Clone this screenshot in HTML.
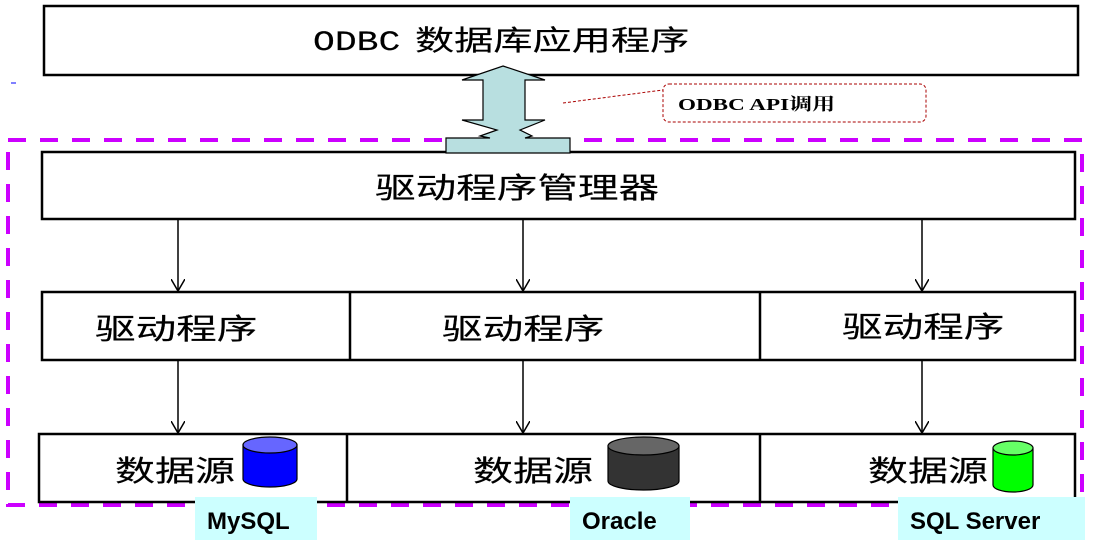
<!DOCTYPE html><html><head><meta charset="utf-8"><style>body{margin:0;background:#fff}svg{display:block}</style></head><body>
<svg width="1097" height="549" xmlns="http://www.w3.org/2000/svg" font-family="'Liberation Sans','Noto Sans CJK SC',sans-serif">
<defs><marker id="a" markerWidth="14" markerHeight="14" refX="12" refY="7" orient="auto" markerUnits="userSpaceOnUse"><path d="M0,0 L12,7 L0,14" fill="none" stroke="#000" stroke-width="1.5"/></marker></defs>
<rect x="44" y="6" width="1034" height="69" fill="#fff" stroke="#000" stroke-width="2.5"/>
<path d="M11,83H16" stroke="#00f" stroke-width="1"/>
<g stroke="#000" stroke-width="0.15" font-size="28">
<text transform="translate(313,50) scale(1.3,1)" font-family="'Liberation Mono',monospace">ODBC</text>
<text transform="translate(415,50) scale(1.4,1)">数据库应用程序</text>
</g>
<rect x="8" y="140" width="1074" height="365" fill="none" stroke="#c0f" stroke-width="4" stroke-dasharray="18,14"/>
<rect x="42" y="152" width="1033" height="67" fill="none" stroke="#000" stroke-width="2.5"/>
<path d="M503,66 L545,80 L525,80 L525,120 L545,120 L520,130 L532,136 L525,138 L570,138 L570,153 L446,153 L446,138 L490,138 L480,136 L497,130 L462,120 L483,120 L483,80 L462,80 Z" fill="#b8dfe0" stroke="#000" stroke-width="1.2"/>
<path d="M563,103 L663,90" stroke="#a00" stroke-width="1" stroke-dasharray="3,2"/>
<rect x="663" y="84" width="263" height="38" rx="6" fill="#fff" stroke="#a00" stroke-dasharray="3,2"/>
<text transform="translate(678,110) scale(1.36,1)" font-size="17" font-weight="bold" font-family="'Liberation Serif','Noto Serif CJK SC',serif">ODBC API调用</text>
<g stroke="#000" stroke-width="2.5" fill="none"><rect x="42" y="292" width="1033" height="68"/><path d="M350,292V360M760,292V360"/>
<rect x="39" y="434" width="1036" height="68"/><path d="M347,434V502M760,434V502"/></g>
<g stroke="#000" stroke-width="1.5" marker-end="url(#a)"><path d="M178,220V291"/><path d="M523,220V291"/><path d="M922,220V291"/><path d="M178,361V433"/><path d="M523,361V433"/><path d="M922,361V433"/></g>
<g font-size="29" stroke="#000" stroke-width="0.15">
<text transform="translate(375,198) scale(1.4,1)">驱动程序管理器</text>
<text transform="translate(95,339) scale(1.4,1)">驱动程序</text><text transform="translate(442,339) scale(1.4,1)">驱动程序</text><text transform="translate(842,337) scale(1.4,1)">驱动程序</text>
<text transform="translate(115,481) scale(1.38,1)">数据源</text><text transform="translate(473,481) scale(1.38,1)">数据源</text><text transform="translate(868,481) scale(1.38,1)">数据源</text></g>
<g stroke="#000" stroke-width="1.2"><path d="M243,445V479A27,8 0 0 0 297,479V445Z" fill="#00f"/><ellipse cx="270" cy="445" rx="27" ry="8" fill="#66f"/>
<path d="M608,446V481A35.5,9 0 0 0 679,481V446Z" fill="#333"/><ellipse cx="643.5" cy="446" rx="35.5" ry="9" fill="#666"/>
<path d="M993,448V485A20,7 0 0 0 1033,485V448Z" fill="#0f0"/><ellipse cx="1013" cy="448" rx="20" ry="7" fill="#6f6"/></g>
<g fill="#ccffff"><rect x="195" y="497" width="122" height="43"/><rect x="570" y="497" width="120" height="43"/><rect x="898" y="497" width="187" height="43"/></g>
<g font-size="24" font-weight="bold"><text x="207" y="529">MySQL</text><text x="582" y="529">Oracle</text><text x="910" y="529">SQL Server</text></g>
</svg></body></html>
